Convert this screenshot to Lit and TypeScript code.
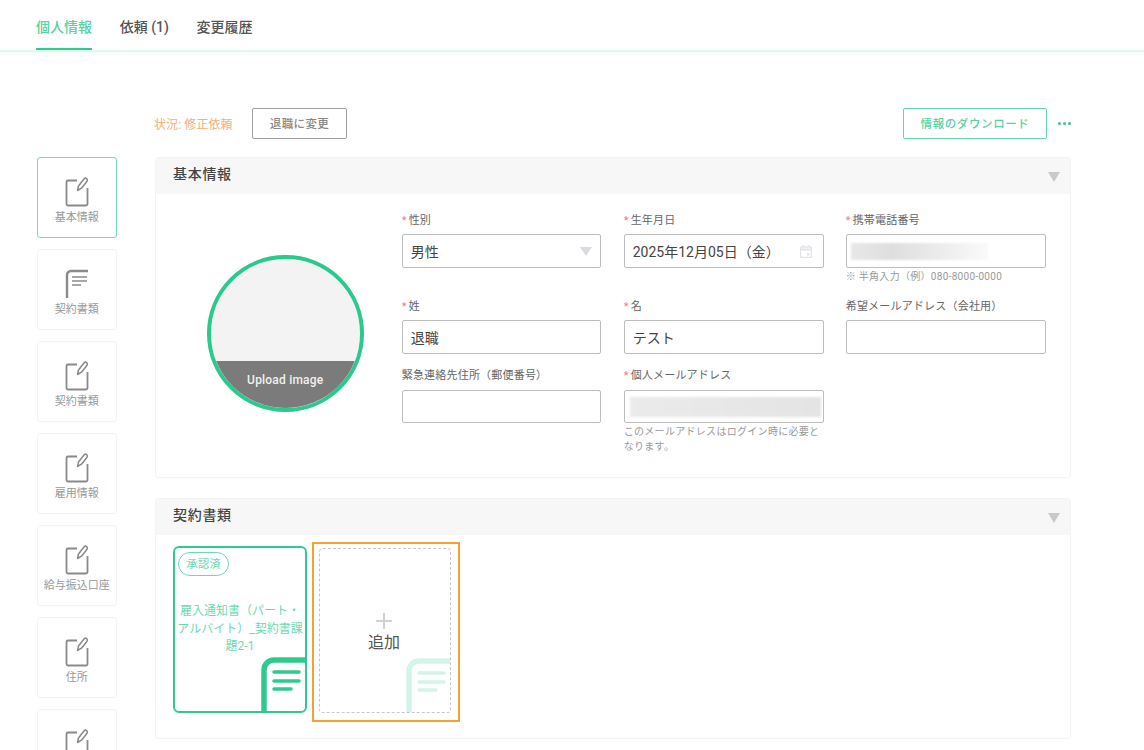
import { LitElement, html, css, svg } from "lit";
import { customElement } from "lit/decorators.js";

const noteIcon = html`<svg class="nav-icon" width="26" height="30" viewBox="0 0 26 30" fill="none" stroke="#8a8a8a">
  <path d="M13 3.5H4a1.500 1.500 0 0 0-1.500 1.500v22a1.500 1.500 0 0 0 1.500 1.500h18a1.500 1.500 0 0 0 1.500-1.500V11" stroke-width="1.800" />
  <path d="M13.5 13.5l1-4.500 5.500-7a1.800 1.800 0 0 1 3 2.200l-5.500 7z" stroke-width="1.500" stroke-linejoin="round" />
</svg>`;

const docIcon = html`<svg class="nav-icon" width="26" height="30" viewBox="0 0 26 30" fill="none" stroke="#8a8a8a">
  <path d="M3 29V6a4 4 0 0 1 4-4h17" stroke-width="2.400" />
  <path d="M8 8h15M8 12h15M8 16h9" stroke-width="1.400" />
</svg>`;

const bigDoc = (color: string) => svg`<svg class="corner" width="44" height="54" viewBox="0 0 44 54" fill="none" stroke="${color}" stroke-linecap="round">
  <path d="M3 54V13a10 10 0 0 1 10-10h31" stroke-width="5.500" stroke-linecap="butt" />
  <path d="M13 15h25M13 24h25M13 32h17" stroke-width="3.500" />
</svg>`;

const navItems = [
  { label: "基本情報", icon: noteIcon, active: true },
  { label: "契約書類", icon: docIcon },
  { label: "契約書類", icon: noteIcon },
  { label: "雇用情報", icon: noteIcon },
  { label: "給与振込口座", icon: noteIcon },
  { label: "住所", icon: noteIcon },
  { label: "", icon: noteIcon },
];

@customElement("app-root")
export class AppRoot extends LitElement {
  static styles = css`
    :host {
      display: block;
      height: 750px;
      overflow: hidden;
      background: #fff;
      color: #333;
      font-family: Roboto, "Noto Sans CJK JP", sans-serif;
    }

    .tabs {
      display: flex;
      gap: 27.700px;
      height: 50px;
      padding-left: 36px;
      border-bottom: 2px solid #e3f8f0;
      box-shadow: 0 2px 4px rgba(46, 204, 143, 0.08);
      font-size: 14px;
      font-weight: 500;
      color: #555;
    }
    .tab {
      height: 50px;
      line-height: 54px;
      box-sizing: border-box;
    }
    .tab.on {
      color: #56d3a3;
      border-bottom: 2px solid #2ecb8e;
    }

    .page {
      display: grid;
      grid-template-columns: 80.500px 916px;
      column-gap: 38px;
      padding: 56px 0 0 36.500px;
    }
    .toolbar {
      grid-column: 2;
      display: flex;
      align-items: center;
      height: 31px;
      margin-bottom: 18px;
    }
    .status {
      width: 98px;
      margin-left: -1px;
      font-size: 12px;
      letter-spacing: 0.1px;
      color: #f7ae7a;
    }
    .btn {
      display: flex;
      align-items: center;
      justify-content: center;
      height: 31px;
      box-sizing: border-box;
      padding-bottom: 2px;
      border-radius: 2px;
      font-size: 11.500px;
      font-weight: 500;
      letter-spacing: 0.4px;
      background: #fff;
    }
    .btn.grey {
      width: 95px;
      border: 1px solid #a0a0a0;
      color: #888;
    }
    .btn.green {
      width: 144px;
      margin-left: auto;
      border: 1px solid #5fd9ab;
      color: #56d3a3;
      letter-spacing: 0.6px;
    }
    .dots {
      display: flex;
      gap: 2px;
      width: 14px;
      margin: 0 -1px 0 11px;
    }
    .dots i {
      width: 3px;
      height: 3px;
      border-radius: 50%;
      background: #2ecb8e;
    }

    nav {
      display: flex;
      flex-direction: column;
      gap: 11px;
    }
    .nav-item {
      display: flex;
      flex-direction: column;
      align-items: center;
      flex: none;
      height: 81px;
      box-sizing: border-box;
      padding-top: 19px;
      border: 1px solid #f3f3f3;
      border-radius: 3px;
      font-size: 11px;
      line-height: 14px;
      color: #999;
    }
    .nav-item.on {
      border-color: #6fdcb3;
    }
    .nav-icon {
      display: block;
      margin-bottom: 4px;
    }

    .content {
      display: flex;
      flex-direction: column;
      gap: 20px;
      min-width: 0;
    }
    section {
      border: 1px solid #f3f3f3;
      border-radius: 3px;
    }
    .sec-head {
      display: flex;
      align-items: center;
      justify-content: space-between;
      height: 36px;
      box-sizing: border-box;
      padding: 0 10px 6px 17px;
      background: #f7f7f7;
      font-size: 14px;
      font-weight: 500;
      color: #444;
      letter-spacing: 0.7px;
    }
    .caret {
      width: 0;
      height: 0;
      margin-top: 7px;
      border-left: 6px solid transparent;
      border-right: 6px solid transparent;
      border-top: 10px solid #c9c9c9;
    }

    .basic {
      display: flex;
      padding: 16px 25px 23px 0;
    }
    .photo-col {
      flex: none;
      width: 245.700px;
      padding-top: 45px;
    }
    .photo {
      position: relative;
      box-sizing: border-box;
      width: 156.500px;
      height: 156.500px;
      margin-left: 51px;
      border: 4px solid #2ac98d;
      border-radius: 50%;
      background: #f3f3f3;
      overflow: hidden;
    }
    .photo span {
      position: absolute;
      left: 0;
      right: 0;
      bottom: 0;
      height: 47px;
      padding-top: 12px;
      box-sizing: border-box;
      background: #7b7b7b;
      color: #f0f0f0;
      text-align: center;
      font-size: 12px;
      font-weight: 500;
      letter-spacing: 0.2px;
    }

    .form {
      display: grid;
      grid-template-columns: repeat(3, 200px);
      column-gap: 22px;
      row-gap: 12px;
      align-items: start;
    }
    .field:nth-child(3n + 1) {
      margin-right: 0.400px;
    }
    .field label {
      display: block;
      height: 16px;
      padding-top: 2px;
      margin-bottom: 6px;
      font-size: 11px;
      line-height: 16px;
      color: #666;
      letter-spacing: 0.2px;
    }
    .field:nth-child(-n + 6) label {
      padding-top: 3px;
      margin-bottom: 5px;
    }
    .field label b {
      font-weight: 400;
      color: #f47c7c;
      margin-right: 2px;
    }
    .input {
      display: flex;
      align-items: center;
      justify-content: space-between;
      height: 34px;
      box-sizing: border-box;
      padding: 0 8px;
      border: 1px solid #bdbdbd;
      border-radius: 2px;
      font-size: 14px;
      color: #444;
      background: #fff;
    }
    .input.low {
      height: 33px;
    }
    .select-caret {
      width: 0;
      height: 0;
      border-left: 6px solid transparent;
      border-right: 6px solid transparent;
      border-top: 9px solid #d8dce0;
    }
    .cal {
      display: block;
      margin-right: 3px;
    }
    .blur {
      height: 17px;
      margin-left: -4px;
      background: linear-gradient(90deg, #e8e8e8 0%, #dedede 30%, #f0f0f0 75%, #fafafa 100%);
      filter: blur(1px);
    }
    .blur.phone {
      width: 137px;
    }
    .blur.mail {
      flex: 1;
      height: 20px;
      margin: 0 -6px 0 -3px;
      background: linear-gradient(90deg, #ebebeb 0%, #e7e7e7 60%, #e4e4e4 100%);
    }
    .hint {
      margin-top: 1px;
      font-size: 10px;
      line-height: 15px;
      color: #999;
      letter-spacing: 0.3px;
    }

    .docs {
      display: flex;
      align-items: flex-start;
      gap: 5px;
      padding: 11px 0 16px 17px;
    }
    .doc {
      position: relative;
      box-sizing: border-box;
      width: 134px;
      height: 167px;
      border: 2px solid #2ecb8e;
      border-radius: 6px;
      overflow: hidden;
      color: #6edab0;
      font-size: 12px;
      line-height: 17.500px;
      text-align: center;
    }
    .badge {
      width: 51px;
      height: 24px;
      margin: 4px 0 27px 3px;
      box-sizing: border-box;
      border: 1px solid #6edab0;
      border-radius: 12px;
      font-size: 11.500px;
      line-height: 22px;
    }
    .doc p {
      margin: 0;
      padding: 0;
    }
    .corner {
      position: absolute;
      right: 0;
      bottom: 0;
      display: block;
    }
    .add-wrap {
      box-sizing: border-box;
      width: 148px;
      height: 180px;
      margin-top: -4px;
      padding: 4px 7px 7px 5px;
      border: 2px solid #f7a02f;
    }
    .add {
      position: relative;
      display: flex;
      flex-direction: column;
      align-items: center;
      height: 100%;
      box-sizing: border-box;
      padding: 63px 2px 0 0;
      border: 1px dashed #c6c6c6;
      border-radius: 4px;
      overflow: hidden;
      font-size: 16px;
      color: #555;
    }
    .plus {
      display: block;
      margin-bottom: -1px;
    }
  `;

  render() {
    return html`
      <header class="tabs">
        <div class="tab on">個人情報</div>
        <div class="tab">依頼 (1)</div>
        <div class="tab">変更履歴</div>
      </header>
      <div class="page">
        <div class="toolbar">
          <span class="status">状況: 修正依頼</span>
          <div class="btn grey">退職に変更</div>
          <div class="btn green">情報のダウンロード</div>
          <div class="dots"><i></i><i></i><i></i></div>
        </div>
        <nav>
          ${navItems.map(
            (n) => html`<div class="nav-item ${n.active ? "on" : ""}">${n.icon}${n.label}</div>`
          )}
        </nav>
        <div class="content">
          <section>
            <div class="sec-head">基本情報<span class="caret"></span></div>
            <div class="basic">
              <div class="photo-col">
                <div class="photo"><span>Upload image</span></div>
              </div>
              <div class="form">
                <div class="field">
                  <label><b>*</b>性別</label>
                  <div class="input">男性<span class="select-caret"></span></div>
                </div>
                <div class="field">
                  <label><b>*</b>生年月日</label>
                  <div class="input">
                    2025年12月05日（金）
                    <svg class="cal" width="12" height="13" viewBox="0 0 12 13" fill="none" stroke="#e2e5e8" stroke-width="1.300">
                      <path d="M1.500 2h9a1 1 0 0 1 1 1v8.500a1 1 0 0 1-1 1h-9a1 1 0 0 1-1-1V3a1 1 0 0 1 1-1z" />
                      <path d="M.5 4.500h11" stroke-width="2" />
                      <path d="M3 0v2M9 0v2" />
                      <rect x="7" y="8" width="2.500" height="2.500" fill="#e2e5e8" stroke="none" />
                    </svg>
                  </div>
                </div>
                <div class="field">
                  <label><b>*</b>携帯電話番号</label>
                  <div class="input"><div class="blur phone"></div></div>
                  <div class="hint">※ 半角入力（例）080-8000-0000</div>
                </div>
                <div class="field">
                  <label><b>*</b>姓</label>
                  <div class="input">退職</div>
                </div>
                <div class="field">
                  <label><b>*</b>名</label>
                  <div class="input">テスト</div>
                </div>
                <div class="field">
                  <label>希望メールアドレス（会社用）</label>
                  <div class="input"></div>
                </div>
                <div class="field">
                  <label>緊急連絡先住所（郵便番号）</label>
                  <div class="input low"></div>
                </div>
                <div class="field">
                  <label><b>*</b>個人メールアドレス</label>
                  <div class="input low"><div class="blur mail"></div></div>
                  <div class="hint">このメールアドレスはログイン時に必要となります。</div>
                </div>
              </div>
            </div>
          </section>
          <section>
            <div class="sec-head">契約書類<span class="caret"></span></div>
            <div class="docs">
              <div class="doc">
                <div class="badge">承認済</div>
                <p>雇入通知書（パート・アルバイト）_契約書課題2-1</p>
                ${bigDoc("#2ecb8e")}
              </div>
              <div class="add-wrap">
                <div class="add">
                  <svg class="plus" width="18" height="18" viewBox="0 0 18 18" stroke="#d2d2d2" stroke-width="2">
                    <path d="M9 1v16M1 9h16" />
                  </svg>
                  追加
                  ${bigDoc("#d2f5e8")}
                </div>
              </div>
            </div>
          </section>
        </div>
      </div>
    `;
  }
}
